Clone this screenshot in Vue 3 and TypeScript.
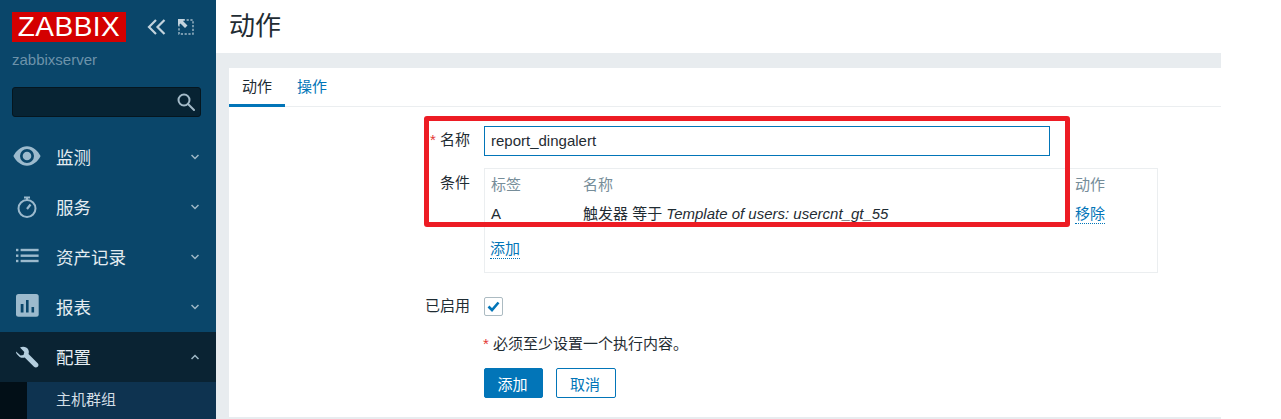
<template>
  <div class="page">
    <aside class="sidebar">
      <div class="brand">
        <div class="logo">ZABBIX</div>
        <svg class="tool" width="19" height="16" viewBox="0 0 19 16" fill="none" stroke="#c3d3dd" stroke-width="2.200">
          <path d="M9 1 2 8l7 7M17.500 1l-7 7 7 7" />
        </svg>
        <svg class="tool kiosk" width="16" height="16" viewBox="0 0 16 16" fill="none">
          <rect x="1" y="1" width="14" height="14" stroke="#9fb8c7" stroke-width="1.400" stroke-dasharray="2.200 1.600" />
          <path d="M0 0h7L5 2l4.500 4.500L7 9 2.500 4.500 0 7z" fill="#c3d3dd" />
        </svg>
      </div>
      <div class="server">zabbixserver</div>
      <div class="search">
        <svg width="18" height="18" viewBox="0 0 18 18" fill="none" stroke="#a3bac8" stroke-width="2">
          <circle cx="7" cy="7" r="5.500" />
          <path d="m11 11 6 6" stroke-linecap="round" />
        </svg>
      </div>
      <nav class="menu">
        <div v-for="item in menu" :key="item.label" class="menu-item" :class="{ active: item.active }">
          <span class="menu-icon">
            <svg width="28" height="28" viewBox="0 0 28 28" v-html="item.icon"></svg>
          </span>
          <span class="menu-label">{{ item.label }}</span>
          <svg class="chevron" width="8" height="6" viewBox="0 0 8 6" fill="none" stroke="#9fb8c7" stroke-width="1.500">
            <path :d="item.active ? 'M.5 5 4 1.500 7.500 5' : 'M.5 1 4 4.500 7.500 1'" />
          </svg>
        </div>
        <div class="submenu">
          <div class="submenu-item">主机群组</div>
        </div>
      </nav>
    </aside>

    <main class="main">
      <header class="title-bar">
        <h1>动作</h1>
      </header>
      <section class="card">
        <div class="tabs">
          <span class="tab current">动作</span>
          <span class="tab">操作</span>
        </div>
        <form class="form" @submit.prevent>
          <div class="row name-row">
            <label class="label name-label"><i class="star">*</i> 名称</label>
            <input class="name-input" type="text" value="report_dingalert" />
          </div>
          <div class="row">
            <label class="label">条件</label>
            <div class="cond-box">
              <div class="cond-line head">
                <span>标签</span>
                <span>名称</span>
                <span>动作</span>
              </div>
              <div class="cond-line">
                <span>A</span>
                <span>触发器 等于 <em>Template of users: usercnt_gt_55</em></span>
                <span><a class="link">移除</a></span>
              </div>
              <div class="cond-add"><a class="link">添加</a></div>
            </div>
          </div>
          <div class="row enabled-row">
            <label class="label">已启用</label>
            <span class="check">
              <svg width="13" height="11" viewBox="0 0 13 11" fill="none" stroke="#0275b8" stroke-width="2.600">
                <path d="m1.500 5.500 3.500 3.500 6.500-7.500" />
              </svg>
            </span>
          </div>
          <div class="row note-row">
            <span class="label"></span>
            <span class="note"><i class="star">*</i> 必须至少设置一个执行内容。</span>
          </div>
          <div class="row btn-row">
            <span class="label"></span>
            <button class="btn primary" type="button">添加</button>
            <button class="btn" type="button">取消</button>
          </div>
        </form>
      </section>
      <div class="highlight"></div>
    </main>
  </div>
</template>

<script setup lang="ts">
interface MenuItem {
  label: string
  icon: string
  active?: boolean
}

const tint = '#9cbacd'

const menu: MenuItem[] = [
  {
    label: '监测',
    icon: `<path fill-rule="evenodd" fill="${tint}" d="M14 3.200C8 3.200 3 7.800.4 13c2.600 5.200 7.600 9.800 13.600 9.800S25 18.200 27.600 13C25 7.800 20 3.200 14 3.200zM14 6a7 7 0 1 1 0 14 7 7 0 0 1 0-14z"/><circle cx="14" cy="13" r="4.300" fill="${tint}"/>`
  },
  {
    label: '服务',
    icon: `<g fill="none" stroke="${tint}" stroke-width="2"><circle cx="14" cy="15.500" r="8.500"/><path d="M11 4.500h6M14 4.500v2.500"/><path d="m14 16 3.500-4.500" stroke-width="2.200"/></g>`
  },
  {
    label: '资产记录',
    icon: `<g fill="${tint}"><rect x="3" y="5.800" width="2.400" height="2.400"/><rect x="3" y="11.500" width="2.400" height="2.400"/><rect x="3" y="16.800" width="2.400" height="2.400"/><rect x="7.600" y="5.800" width="18" height="2.400"/><rect x="7.600" y="11.500" width="18" height="2.400"/><rect x="7.600" y="16.800" width="18" height="2.400"/></g>`
  },
  {
    label: '报表',
    icon: `<rect x="3" y="1" width="22.700" height="22.700" rx="2.500" fill="${tint}"/><g fill="#0a466a"><rect x="7.700" y="11" width="2.800" height="8.500"/><rect x="13" y="7" width="2.600" height="12.500"/><rect x="18.500" y="14" width="2.600" height="5.500"/></g>`
  },
  {
    label: '配置',
    active: true,
    icon: `<path fill="#b4cede" d="M3 8.500 7.500 12.500l3-.5.800-3L7 4.500c3-1.500 6.800-.8 8.200 2 .8 1.500.8 3.200.3 4.500l9.200 9.200c1 1 1 2.500 0 3.500s-2.700 1-3.700 0l-9.300-9.200c-1.500.5-3.500.3-5-.6C4 11.300 2.800 10.500 3 8.500z"/>`
  }
]
</script>

<style>
html,
body {
  margin: 0;
  background: #fff;
}
</style>

<style scoped>
.page {
  display: flex;
  width: 1281px;
  height: 419px;
  overflow: hidden;
  background: #fff;
  font-family: "Liberation Sans", "Noto Sans CJK SC", sans-serif;
  font-size: 15px;
  color: #1f2c33;
}

/* 左侧菜单 */
.sidebar {
  width: 216px;
  flex: none;
  background: #0a466a;
  color: #f2f2f2;
}

.brand {
  display: flex;
  align-items: center;
  padding: 12px 0 0 12px;
  height: 30px;
}

.logo {
  width: 114px;
  height: 30px;
  background: #d40000;
  color: #fff;
  font-size: 28px;
  line-height: 30px;
  text-align: center;
  letter-spacing: 0.5px;
}

.tool {
  margin-left: 21px;
  flex: none;
}

.kiosk {
  margin-left: 12px;
}

.server {
  padding: 9px 0 0 12px;
  height: 36px;
  box-sizing: border-box;
  line-height: 18px;
  color: #6d93ab;
}

.search {
  display: flex;
  align-items: center;
  justify-content: flex-end;
  box-sizing: border-box;
  width: 189px;
  height: 30px;
  margin: 9px 0 15px 12px;
  padding-right: 5px;
  background: #072333;
  border: 1px solid #05161f;
  border-radius: 3px;
}

.menu-item {
  display: flex;
  align-items: center;
  height: 50px;
  padding: 0 17px 0 13px;
}

.menu-item.active {
  background: #0a2333;
}

.menu-icon {
  display: flex;
  width: 43px;
  flex: none;
}

.menu-label {
  flex: 1;
  padding-bottom: 2px;
  font-size: 17.500px;
  color: #e4ecf1;
}

.submenu {
  height: 37px;
  background: #0e3350;
  border-left: 27px solid #020f17;
}

.submenu-item {
  padding: 8px 0 0 29px;
  line-height: 20px;
  color: #d3dee5;
}

/* 右侧内容 */
.main {
  position: relative;
  width: 1005px;
  flex: none;
  height: 419px;
  background: #e8ecef;
}

.title-bar {
  height: 53px;
  background: #fff;
  padding-left: 13px;
  box-sizing: border-box;
}

.title-bar h1 {
  margin: 0;
  padding-top: 8px;
  font-size: 26px;
  line-height: 36px;
  font-weight: 400;
  color: #1f2c33;
}

.card {
  margin: 15px 0 0 13px;
  height: 349px;
  background: #fff;
}

.tabs {
  display: flex;
  height: 38px;
  border-bottom: 1px solid #ebeef0;
}

.tab {
  padding: 0 13px 0 12px;
  line-height: 38px;
  color: #0275b8;
}

.tab.current {
  padding: 0 13px;
  color: #1f2c33;
  border-bottom: 3px solid #0275b8;
  height: 36px;
}

.form {
  padding-top: 19px;
}

.row {
  display: flex;
  align-items: flex-start;
}

.label {
  width: 241px;
  flex: none;
  margin-right: 14px;
  text-align: right;
  line-height: 30px;
}

.name-label {
  line-height: 28px;
}

.star {
  font-style: normal;
  color: #e33734;
}

.name-input {
  box-sizing: border-box;
  width: 566px;
  height: 30px;
  padding: 0 6px 2px;
  border: 1px solid #0275b8;
  outline: none;
  font: inherit;
  color: #1f2c33;
}

.name-row {
  margin-bottom: 12px;
}

.cond-box {
  box-sizing: border-box;
  width: 674px;
  height: 105px;
  padding-top: 1px;
  border: 1px solid #ebeef0;
}

.cond-line {
  display: grid;
  grid-template-columns: 92px 492px 1fr;
  padding-left: 6px;
  line-height: 29px;
}

.cond-line.head {
  color: #768d99;
}

.cond-add {
  padding: 6px 0 0 5px;
  line-height: 29px;
}

.link {
  color: #0275b8;
  border-bottom: 1px dotted #0275b8;
  padding-bottom: 1px;
}

.enabled-row {
  align-items: center;
  margin-top: 18px;
  height: 30px;
}

.check {
  box-sizing: border-box;
  display: flex;
  align-items: center;
  justify-content: center;
  width: 19px;
  height: 19px;
  border: 1px solid #acbbc2;
  border-radius: 2px;
}

.note-row {
  margin-top: 8px;
}

.note {
  margin-left: -1px;
  line-height: 30px;
}

.btn-row {
  margin-top: 9px;
}

.btn {
  box-sizing: border-box;
  width: 60px;
  height: 30px;
  margin-right: 12px;
  padding: 0 2px 0 0;
  background: #fff;
  border: 1px solid #0275b8;
  border-radius: 2px;
  color: #0275b8;
  font: inherit;
}

.btn.primary {
  width: 59px;
  margin-right: 13px;
  background: #0275b8;
  color: #fff;
}

/* 截图上的红色标注框 */
.highlight {
  position: absolute;
  left: 208px;
  top: 116px;
  width: 646px;
  height: 111px;
  box-sizing: border-box;
  border: 5px solid #ed1c24;
  border-radius: 3px;
}
</style>
